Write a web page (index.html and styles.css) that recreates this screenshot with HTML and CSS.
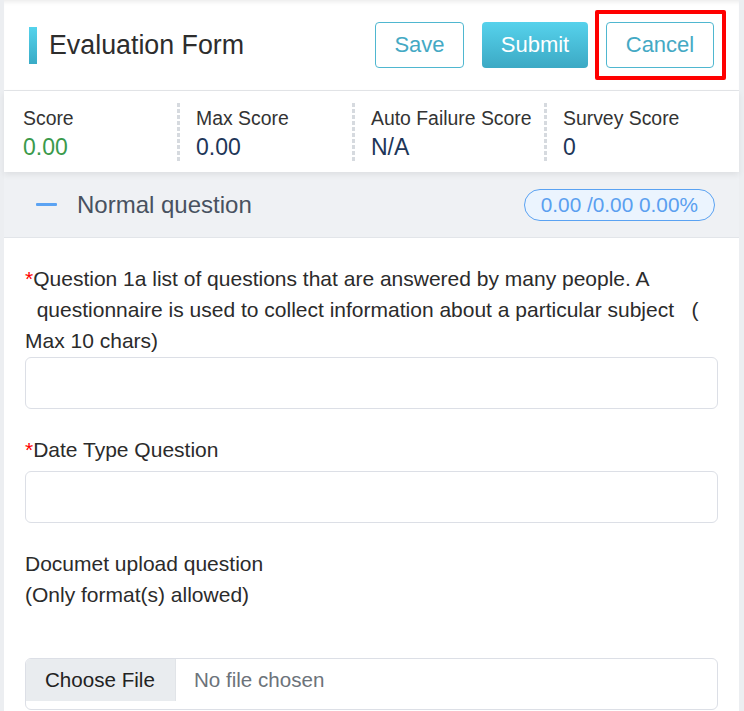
FILE: index.html
```html
<!DOCTYPE html>
<html lang="en">
<head>
<meta charset="utf-8">
<title>Evaluation Form</title>
<link rel="stylesheet" href="styles.css">
</head>
<body>
<div class="card">
  <header class="header">
    <span class="accent"></span>
    <h1 class="title">Evaluation Form</h1>
    <div class="actions">
      <button class="btn btn-outline btn-save" type="button">Save</button>
      <button class="btn btn-primary" type="button">Submit</button>
      <span class="highlight">
        <button class="btn btn-outline btn-cancel" type="button">Cancel</button>
      </span>
    </div>
  </header>

  <section class="stats">
    <div class="stat">
      <div class="stat-label">Score</div>
      <div class="stat-value stat-good">0.00</div>
    </div>
    <div class="stat">
      <div class="stat-label">Max Score</div>
      <div class="stat-value">0.00</div>
    </div>
    <div class="stat">
      <div class="stat-label">Auto Failure Score</div>
      <div class="stat-value">N/A</div>
    </div>
    <div class="stat">
      <div class="stat-label">Survey Score</div>
      <div class="stat-value">0</div>
    </div>
  </section>

  <div class="section-head">
    <span class="collapse-icon"></span>
    <span class="section-title">Normal question</span>
    <span class="badge">0.00 /0.00 0.00%</span>
  </div>

  <form class="form">
    <div class="field">
      <label class="q-label q-label-long"><span class="req">*</span>Question 1a list of questions that are answered by many people. A &nbsp;&nbsp;questionnaire is used to collect information about a particular subject &nbsp; (<br>Max 10 chars)</label>
      <input class="q-input" type="text">
    </div>
    <div class="field">
      <label class="q-label q-label-short"><span class="req">*</span>Date Type Question</label>
      <input class="q-input" type="text">
    </div>
    <div class="field">
      <div class="q-label q-label-doc">Documet upload question<br>(Only format(s) allowed)</div>
      <label class="file-control">
        <span class="file-btn">Choose File</span>
        <span class="file-name">No file chosen</span>
      </label>
    </div>
  </form>
</div>
</body>
</html>
```

FILE: styles.css
```css
* { box-sizing: border-box; }

body {
  margin: 0;
  background: #eceef1;
  font-family: "Liberation Sans", Arial, sans-serif;
  color: #2b2b2b;
}

.card {
  margin: 0 5px 0 4px;
  background: #ffffff;
  min-height: 711px;
}

/* Header */
.header {
  height: 91px;
  display: flex;
  align-items: center;
  padding: 0 25px;
  border-bottom: 1px solid #e3e5e8;
  box-shadow: inset 0 5px 4px -3px rgba(0, 0, 0, 0.08);
}

.accent {
  width: 8px;
  height: 37px;
  background: linear-gradient(to bottom, #55d3ec, #39abc6);
  margin-right: 12px;
}

.title {
  margin: 0;
  font-size: 26.8px;
  font-weight: normal;
  color: #2d2d2d;
}

.actions {
  margin-left: auto;
  display: flex;
  gap: 18px;
}

.btn {
  display: block;
  height: 46px;
  border-radius: 4px;
  font-family: inherit;
  font-size: 22px;
  padding: 0;
  cursor: pointer;
}

.btn-outline {
  background: #ffffff;
  border: 1px solid #4fb7d0;
  color: #44a9c4;
}

.btn-save { width: 89px; }

.btn-cancel { width: 108px; }

.highlight {
  position: relative;
  display: block;
}

.highlight::after {
  content: "";
  position: absolute;
  top: -12px;
  right: -12px;
  bottom: -12px;
  left: -11px;
  border: 4px solid #ff0000;
  border-radius: 2px;
  pointer-events: none;
}

.btn-primary {
  width: 106px;
  border: none;
  color: #ffffff;
  background: linear-gradient(to bottom, #56d2ec, #3ca9c4);
}

/* Stats */
.stats {
  position: relative;
  z-index: 1;
  display: grid;
  grid-template-columns: 173px 175px 192px 1fr;
  padding: 12px 0 10px;
  background: #ffffff;
  box-shadow: 0 3px 6px rgba(0, 0, 0, 0.07);
}

.stat {
  height: 59px;
  padding: 3px 0 0 19px;
}

.stat + .stat {
  background: repeating-linear-gradient(to bottom, #d6dadf 0 4px, transparent 4px 6px) left top / 3px 100% no-repeat;
}

.stat-label {
  font-size: 19.4px;
  line-height: 24px;
  color: #333333;
}

.stat-value {
  font-size: 23px;
  line-height: 34px;
  color: #1e3658;
}

.stat-good { color: #3a9a4b; }

/* Section header */
.section-head {
  height: 66px;
  display: flex;
  align-items: center;
  padding: 0 24px 0 32px;
  background: #eff1f4;
  border-bottom: 1px solid #e2e5e9;
}

.collapse-icon {
  width: 21px;
  height: 3px;
  border-radius: 1px;
  background: #5ba3f3;
  margin-right: 20px;
}

.section-title {
  font-size: 24px;
  color: #485160;
}

.badge {
  margin-left: auto;
  height: 32px;
  padding: 0 16px;
  border: 1px solid #5aa2f2;
  border-radius: 16px;
  background: #ebf4fe;
  color: #5a9ff0;
  font-size: 20.8px;
  line-height: 30px;
}

/* Form */
.form {
  padding: 25px 21px 0;
}

.field + .field { margin-top: 25px; }

.q-label {
  display: block;
  font-size: 21px;
  line-height: 31px;
  color: #2b2b2b;
}

.q-label-long { margin-bottom: 1px; }
.q-label-short { margin-bottom: 6px; }
.q-label-doc { margin-bottom: 48px; }

.req { color: #ff0000; }

.q-input {
  display: block;
  width: 100%;
  height: 52px;
  border: 1px solid #dcdfe6;
  border-radius: 6px;
  background: #ffffff;
  font-family: inherit;
  font-size: 20px;
  padding: 0 14px;
}

.file-control {
  display: flex;
  height: 52px;
  margin-top: 1px;
  border: 1px solid #dcdfe6;
  border-radius: 6px;
  overflow: hidden;
  font-size: 20.6px;
  align-items: flex-start;
}

.file-btn {
  height: 42px;
  line-height: 42px;
  padding: 0 20px 0 19px;
  background: #e9ecef;
  color: #222222;
  border-right: 1px solid #e1e4e8;
}

.file-name {
  line-height: 42px;
  padding-left: 18px;
  color: #6c737a;
}
```
